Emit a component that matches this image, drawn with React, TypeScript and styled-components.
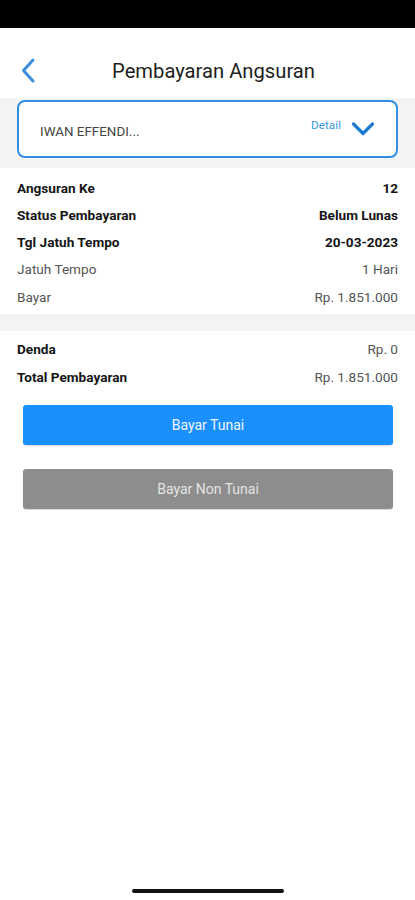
import React from "react";
import styled, { createGlobalStyle } from "styled-components";

const Global = createGlobalStyle`
  html, body { margin: 0; padding: 0; background: #fff; }
  body { font-family: Roboto, "Noto Sans", Arial, sans-serif; -webkit-font-smoothing: antialiased; }
  * { box-sizing: border-box; }
`;

const Screen = styled.div`
  width: 415px;
  height: 900px;
  display: flex;
  flex-direction: column;
  background: #fff;
  overflow: hidden;
`;

const StatusBar = styled.div`
  height: 28px;
  background: #000;
  flex-shrink: 0;
`;

const Header = styled.div`
  display: grid;
  grid-template-columns: 60px 1fr 48px;
  align-items: center;
  height: 24px;
  margin: 30px 0 16px;
`;

const BackButton = styled.div`
  display: flex;
  align-items: center;
  padding-left: 20px;
`;

const Title = styled.h1`
  margin: 0;
  text-align: center;
  font-size: 20.2px;
  font-weight: 400;
  color: #1e1e1e;
`;

const GrayBand = styled.div<{ $h?: number }>`
  background: #f3f3f3;
  padding: ${(p) => (p.$h ? "0" : "2px 17px 10px")};
  height: ${(p) => (p.$h ? `${p.$h}px` : "auto")};
`;

const Card = styled.div`
  height: 58px;
  border: 2px solid #2f8fe0;
  border-radius: 8px;
  background: #fff;
  display: flex;
  align-items: center;
  padding: 0 21px;
`;

const Name = styled.span`
  flex: 1;
  font-size: 13.4px;
  color: #444;
  padding-top: 4px;
`;

const DetailLink = styled.span`
  font-size: 11.8px;
  color: #3c9be0;
  margin-right: 10px;
  margin-top: -8px;
`;

const Section = styled.div<{ $pt: number; $pb: number }>`
  padding: ${(p) => p.$pt}px 17px ${(p) => p.$pb}px;
  display: flex;
  flex-direction: column;
`;

const Row = styled.div<{ $h?: number }>`
  height: ${(p) => p.$h ?? 27.25}px;
  display: flex;
  align-items: center;
  justify-content: space-between;
  font-size: 13.6px;
`;

const Label = styled.span<{ $bold?: boolean }>`
  font-weight: ${(p) => (p.$bold ? 700 : 400)};
  color: ${(p) => (p.$bold ? "#151515" : "#555")};
`;

const Value = Label;

const Buttons = styled.div`
  display: flex;
  flex-direction: column;
  gap: 24px;
  padding: 14px 22px 0 23px;
`;

const Button = styled.div<{ $variant: "primary" | "muted" }>`
  height: 40px;
  border-radius: 3px;
  display: flex;
  align-items: center;
  justify-content: center;
  font-size: 14px;
  background: ${(p) => (p.$variant === "primary" ? "#1a90ff" : "#8d8d8d")};
  color: ${(p) => (p.$variant === "primary" ? "#eef6ff" : "#e4e4e4")};
  box-shadow: 0 1px 1px rgba(0, 0, 0, 0.15);
`;

const Spacer = styled.div`
  flex: 1;
`;

const HomeIndicator = styled.div`
  width: 152px;
  height: 4px;
  border-radius: 2px;
  background: #111;
  align-self: center;
  margin-bottom: 7px;
`;

export default function App() {
  return (
    <>
      <Global />
      <Screen>
        <StatusBar />
        <Header>
          <BackButton>
            <svg width="16" height="25" viewBox="0 0 16 25">
              <path d="M13 2 L3.5 12.5 L13 23" fill="none" stroke="#3a8edb" strokeWidth="3" strokeLinecap="round" strokeLinejoin="round" />
            </svg>
          </BackButton>
          <Title>Pembayaran Angsuran</Title>
          <div />
        </Header>
        <GrayBand>
          <Card>
            <Name>IWAN EFFENDI...</Name>
            <DetailLink>Detail</DetailLink>
            <svg width="24" height="16" viewBox="0 0 24 16">
              <path d="M2.5 3 L12 12.5 L21.5 3" fill="none" stroke="#1d7bd3" strokeWidth="3.2" strokeLinecap="round" strokeLinejoin="round" />
            </svg>
          </Card>
        </GrayBand>
        <Section $pt={6} $pb={4}>
          <Row><Label $bold>Angsuran Ke</Label><Value $bold>12</Value></Row>
          <Row><Label $bold>Status Pembayaran</Label><Value $bold>Belum Lunas</Value></Row>
          <Row><Label $bold>Tgl Jatuh Tempo</Label><Value $bold>20-03-2023</Value></Row>
          <Row><Label>Jatuh Tempo</Label><Value>1 Hari</Value></Row>
          <Row><Label>Bayar</Label><Value>Rp. 1.851.000</Value></Row>
        </Section>
        <GrayBand $h={17} />
        <Section $pt={4} $pb={0}>
          <Row $h={28}><Label $bold>Denda</Label><Value>Rp. 0</Value></Row>
          <Row $h={28}><Label $bold>Total Pembayaran</Label><Value>Rp. 1.851.000</Value></Row>
        </Section>
        <Buttons>
          <Button $variant="primary">Bayar Tunai</Button>
          <Button $variant="muted">Bayar Non Tunai</Button>
        </Buttons>
        <Spacer />
        <HomeIndicator />
      </Screen>
    </>
  );
}
